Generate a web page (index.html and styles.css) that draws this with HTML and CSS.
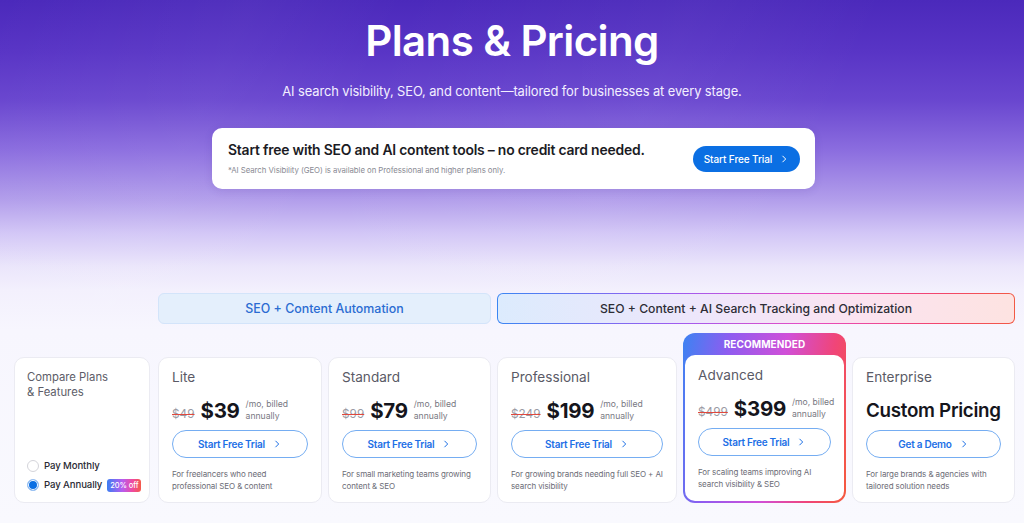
FILE: index.html
```html
<!DOCTYPE html>
<html lang="en">
<head>
<meta charset="utf-8">
<title>Plans &amp; Pricing</title>
<link rel="stylesheet" href="styles.css">
</head>
<body>
<main class="page">
  <header class="hero">
    <h1 class="title">Plans &amp; Pricing</h1>
    <p class="subtitle">AI search visibility, SEO, and content—tailored for businesses at every stage.</p>
    <div class="promo">
      <div class="promo-text">
        <h2 class="promo-heading">Start free with SEO and AI content tools – no credit card needed.</h2>
        <p class="promo-note">*AI Search Visibility (GEO) is available on Professional and higher plans only.</p>
      </div>
      <a class="btn-primary" href="#">Start Free Trial
        <svg class="chev" viewBox="0 0 24 24" width="10" height="10"><path d="M9 5l7 7-7 7" fill="none" stroke="currentColor" stroke-width="2.4" stroke-linecap="round" stroke-linejoin="round"/></svg>
      </a>
    </div>
  </header>

  <section class="plans">
    <div class="tab tab-seo">SEO + Content Automation</div>
    <div class="tab tab-ai">SEO + Content + AI Search Tracking and Optimization</div>

    <div class="card compare">
      <p class="compare-title">Compare Plans &amp; Features</p>
      <div class="billing">
        <label class="radio-row"><span class="radio"></span>Pay Monthly</label>
        <label class="radio-row"><span class="radio radio-on"></span>Pay Annually <span class="badge">20% off</span></label>
      </div>
    </div>

    <div class="card plan">
      <h3 class="plan-name">Lite</h3>
      <div class="price-row">
        <span class="old-price">$49</span>
        <span class="price">$39</span>
        <span class="per">/mo, billed<br>annually</span>
      </div>
      <a class="btn-outline" href="#">Start Free Trial <svg class="chev" viewBox="0 0 24 24" width="10" height="10"><path d="M9 5l7 7-7 7" fill="none" stroke="currentColor" stroke-width="2.4" stroke-linecap="round" stroke-linejoin="round"/></svg></a>
      <p class="desc">For freelancers who need professional SEO &amp; content</p>
    </div>

    <div class="card plan">
      <h3 class="plan-name">Standard</h3>
      <div class="price-row">
        <span class="old-price">$99</span>
        <span class="price">$79</span>
        <span class="per">/mo, billed<br>annually</span>
      </div>
      <a class="btn-outline" href="#">Start Free Trial <svg class="chev" viewBox="0 0 24 24" width="10" height="10"><path d="M9 5l7 7-7 7" fill="none" stroke="currentColor" stroke-width="2.4" stroke-linecap="round" stroke-linejoin="round"/></svg></a>
      <p class="desc">For small marketing teams growing content &amp; SEO</p>
    </div>

    <div class="card plan">
      <h3 class="plan-name">Professional</h3>
      <div class="price-row">
        <span class="old-price">$249</span>
        <span class="price">$199</span>
        <span class="per">/mo, billed<br>annually</span>
      </div>
      <a class="btn-outline" href="#">Start Free Trial <svg class="chev" viewBox="0 0 24 24" width="10" height="10"><path d="M9 5l7 7-7 7" fill="none" stroke="currentColor" stroke-width="2.4" stroke-linecap="round" stroke-linejoin="round"/></svg></a>
      <p class="desc">For growing brands needing full SEO + AI search visibility</p>
    </div>

    <div class="featured">
      <div class="featured-label">RECOMMENDED</div>
      <div class="card plan featured-card">
        <h3 class="plan-name">Advanced</h3>
        <div class="price-row">
          <span class="old-price">$499</span>
          <span class="price">$399</span>
          <span class="per">/mo, billed<br>annually</span>
        </div>
        <a class="btn-outline" href="#">Start Free Trial <svg class="chev" viewBox="0 0 24 24" width="10" height="10"><path d="M9 5l7 7-7 7" fill="none" stroke="currentColor" stroke-width="2.4" stroke-linecap="round" stroke-linejoin="round"/></svg></a>
        <p class="desc">For scaling teams improving AI search visibility &amp; SEO</p>
      </div>
    </div>

    <div class="card plan">
      <h3 class="plan-name">Enterprise</h3>
      <div class="custom-price">Custom Pricing</div>
      <a class="btn-outline" href="#">Get a Demo <svg class="chev" viewBox="0 0 24 24" width="10" height="10"><path d="M9 5l7 7-7 7" fill="none" stroke="currentColor" stroke-width="2.4" stroke-linecap="round" stroke-linejoin="round"/></svg></a>
      <p class="desc">For large brands &amp; agencies with tailored solution needs</p>
    </div>
  </section>
</main>
</body>
</html>
```

FILE: styles.css
```css
* { box-sizing: border-box; }

html, body {
  margin: 0;
  padding: 0;
}

body {
  width: 1024px;
  height: 523px;
  overflow: hidden;
  font-family: Inter, "Noto Sans", "Liberation Sans", sans-serif;
  color: #1a1a22;
  background:
    linear-gradient(115deg, rgba(255,255,255,0) 0%, rgba(255,255,255,0.04) 20%, rgba(255,255,255,0) 32%, rgba(255,255,255,0.04) 55%, rgba(255,255,255,0) 70%),
    linear-gradient(180deg,
      #4b29bb 0px,
      #5834c5 50px,
      #6946cf 100px,
      #8b6ddf 150px,
      #b29eeb 200px,
      #d2c6f6 233px,
      #ebe6fb 267px,
      #f3f0fd 290px,
      #f7f6fe 330px,
      #f9f9fe 523px);
}

.page {
  display: flex;
  flex-direction: column;
}

/* hero */
.hero {
  display: flex;
  flex-direction: column;
  align-items: center;
  padding-top: 14px;
}

.title {
  margin: 0;
  font-size: 42px;
  line-height: 54px;
  font-weight: 600;
  letter-spacing: -0.6px;
  color: #ffffff;
}

.subtitle {
  margin: 15px 0 0;
  font-size: 12.9px;
  line-height: 18px;
  color: #f3efff;
  letter-spacing: -0.1px;
}

.promo {
  margin-top: 27px;
  width: 603px;
  height: 61px;
  margin-left: 3px;
  background: #ffffff;
  border-radius: 10px;
  display: flex;
  align-items: center;
  justify-content: space-between;
  padding: 0 15px 0 16px;
  box-shadow: 0 2px 8px rgba(60, 30, 140, 0.12);
}

.promo-heading {
  margin: 0;
  font-size: 13.9px;
  line-height: 19px;
  font-weight: 600;
  color: #1b1b24;
  letter-spacing: -0.2px;
}

.promo-note {
  margin: 5px 0 0;
  font-size: 7.8px;
  line-height: 11px;
  color: #8a8a94;
  letter-spacing: -0.05px;
}

.btn-primary {
  display: flex;
  align-items: center;
  justify-content: center;
  gap: 7px;
  width: 107px;
  height: 26px;
  border-radius: 13px;
  background: #0b6fe3;
  color: #ffffff;
  font-size: 10px;
  font-weight: 500;
  letter-spacing: -0.1px;
  text-decoration: none;
}

.chev { flex: none; }

/* plans */
.plans {
  margin-top: 104px;
  padding-left: 14px;
  display: grid;
  grid-template-columns: 138px 164px 163px 180px 163px 163px;
  column-gap: 6px;
  row-gap: 9px;
  align-items: end;
}

.tab {
  height: 31px;
  border-radius: 6px;
  display: flex;
  align-items: center;
  justify-content: center;
  font-size: 12.4px;
  font-weight: 500;
}

.tab-seo {
  grid-column: 2 / 4;
  background: #e4effc;
  border: 1px solid #d3e4fa;
  color: #2b6cd2;
}

.tab-ai {
  grid-column: 4 / 7;
  border: 1.5px solid transparent;
  color: #2d2d36;
  font-size: 12.2px;
  background:
    linear-gradient(90deg, #dcebfd 0%, #eee6fb 40%, #fbe3f0 70%, #fde3e1 100%) padding-box,
    linear-gradient(90deg, #3b86f3 0%, #a05cf0 35%, #e64cc4 60%, #f2456d 85%, #f25a45 100%) border-box;
}

.card {
  height: 146px;
  background: #ffffff;
  border: 1px solid #ebebf2;
  border-radius: 10px;
}

.compare {
  width: 136px;
  padding: 12px 10px 10px 12px;
  display: flex;
  flex-direction: column;
  justify-content: space-between;
}

.compare-title {
  margin: 0;
  font-size: 11.3px;
  line-height: 15px;
  color: #5d5d68;
  width: 90px;
}

.billing {
  display: flex;
  flex-direction: column;
  gap: 5px;
}

.radio-row {
  display: flex;
  align-items: center;
  gap: 5px;
  font-size: 9.6px;
  font-weight: 500;
  color: #2a2a33;
  line-height: 14px;
  white-space: nowrap;
  letter-spacing: -0.1px;
}

.radio {
  width: 12px;
  height: 12px;
  border-radius: 50%;
  border: 1px solid #d4d4da;
  background: #fff;
  flex: none;
}

.radio-on {
  border: 1.5px solid #9cc3f3;
  background: #0b6fe3;
  box-shadow: inset 0 0 0 1px #ffffff;
}

.badge {
  padding: 1px 3px;
  border-radius: 3px;
  font-size: 7.5px;
  line-height: 11px;
  font-weight: 500;
  color: #ffffff;
  letter-spacing: -0.1px;
  background: linear-gradient(90deg, #3b7ef2, #b65cf0 45%, #ef4aa0 75%, #f45a4a);
}

.plan {
  padding: 10px 13px 0 13px;
  display: flex;
  flex-direction: column;
}

.plan-name {
  margin: 0;
  font-size: 13.6px;
  line-height: 18px;
  font-weight: 400;
  color: #5a5a66;
}

.price-row {
  margin-top: 12px;
  height: 26px;
  display: flex;
  align-items: center;
  gap: 6px;
  white-space: nowrap;
}

.old-price {
  font-size: 11.8px;
  color: #9b9ba4;
  text-decoration: line-through;
  text-decoration-color: #e0483e;
  margin-top: 6px;
}

.price {
  font-size: 20.5px;
  line-height: 26px;
  font-weight: 700;
  color: #15151c;
  letter-spacing: -0.3px;
}

.per {
  font-size: 8.6px;
  line-height: 12px;
  color: #77777f;
  margin-top: -2px;
}

.custom-price {
  margin-top: 12px;
  height: 26px;
  font-size: 18.8px;
  line-height: 26px;
  font-weight: 600;
  color: #15151c;
  letter-spacing: -0.3px;
}

.btn-outline {
  margin-top: 6px;
  height: 28px;
  border-radius: 14px;
  border: 1.5px solid #75adf2;
  display: flex;
  align-items: center;
  justify-content: center;
  gap: 7px;
  font-size: 10px;
  font-weight: 600;
  letter-spacing: -0.25px;
  color: #1d70e6;
  text-decoration: none;
}

.desc {
  margin: 11px 0 0;
  font-size: 8px;
  line-height: 11.5px;
  color: #6c6c76;
  letter-spacing: -0.1px;
}

/* featured */
.featured {
  height: 170px;
  border-radius: 12px;
  padding: 0 2px 2px 2px;
  display: flex;
  flex-direction: column;
  background: linear-gradient(100deg, #3c83f2 0%, #8f5cf0 25%, #d04fd8 55%, #f04578 80%, #f55a3c 100%);
}

.featured-label {
  height: 22px;
  display: flex;
  align-items: center;
  justify-content: center;
  font-size: 10px;
  font-weight: 700;
  color: #ffffff;
  letter-spacing: 0.1px;
}

.featured-card {
  height: 146px;
  border: none;
  border-radius: 10px;
  padding-top: 11px;
}
```
